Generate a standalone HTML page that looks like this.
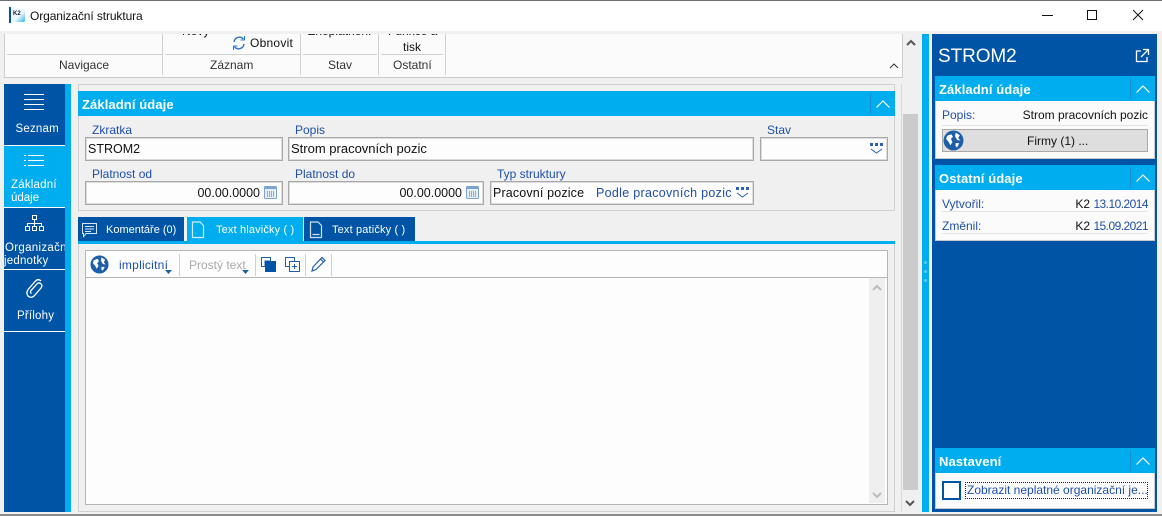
<!DOCTYPE html>
<html><head><meta charset="utf-8"><style>
html,body{margin:0;padding:0;width:1162px;height:516px;overflow:hidden;background:#f0f0f0;font-family:"Liberation Sans",sans-serif;font-size:12px;color:#111}
div,span,svg{position:absolute;box-sizing:border-box}
.t{white-space:nowrap;line-height:16px}
.lb{color:#1f4fa8}
.in{background:#fdfdfd;border:1px solid #a8a8a8;box-shadow:inset 0 0 0 1px #dcdcdc;height:24px}
.b{font-weight:bold;color:#fff;font-size:13px;letter-spacing:.1px}
.w{color:#fff}
.line{background:#d0d0d0}
.d{position:static;letter-spacing:-.55px}
</style></head><body>
<div style="left:0;top:0;width:1162px;height:31px;background:#fff"></div>
<div style="left:0;top:0;width:1162px;height:1px;background:#6e6e6e"></div>
<div style="left:0;top:514px;width:1162px;height:2px;background:#8a8a8a"></div>
<div style="left:9px;top:7px;width:2px;height:16px;background:#0054a6"></div>
<div style="left:12px;top:9px;width:13px;height:13px;background:linear-gradient(135deg,#eef6fb 55%,#22b5ee);border-radius:2px"></div>
<div class="t" style="left:13px;top:10px;font-size:6px;line-height:9px;font-weight:bold;color:#123">K2</div>
<div class="t" style="left:30px;top:8px;font-size:12px;letter-spacing:-.1px">Organizační struktura</div>
<div style="left:1042px;top:15px;width:11px;height:1px;background:#111"></div>
<div style="left:1087px;top:10px;width:10px;height:10px;border:1px solid #111"></div>
<svg style="left:1132px;top:9px" width="12" height="12"><path d="M1 1L11 11M11 1L1 11" stroke="#111" fill="none"/></svg>

<!-- ribbon -->
<div style="left:4px;top:34px;width:899px;height:44px;background:#fbfbfb;border-left:1px solid #cfcfcf;border-right:1px solid #cfcfcf;border-bottom:1px solid #c8c8c8;overflow:hidden">
<div class="t" style="left:177px;top:-11px">Nový</div>
<div class="t" style="left:245px;top:1px;letter-spacing:.25px">Obnovit</div>
<div class="t" style="left:303px;top:-11px">Zneplatnění</div>
<div class="t" style="left:383px;top:-11px">Funkce a</div>
<div class="t" style="left:398px;top:5px">tisk</div>
<div class="line" style="left:2px;top:20px;width:155px;height:1px"></div>
<div class="line" style="left:160px;top:20px;width:135px;height:1px"></div>
<div class="line" style="left:298px;top:20px;width:74px;height:1px"></div>
<div class="line" style="left:376px;top:20px;width:62px;height:1px"></div>
<div class="line" style="left:157px;top:0;width:1px;height:41px"></div>
<div class="line" style="left:295px;top:0;width:1px;height:41px"></div>
<div class="line" style="left:373px;top:0;width:1px;height:41px"></div>
<div class="line" style="left:440px;top:0;width:1px;height:41px"></div>
<div class="t" style="left:54px;top:23px;color:#333">Navigace</div>
<div class="t" style="left:205px;top:23px;color:#333">Záznam</div>
<div class="t" style="left:323px;top:23px;color:#333">Stav</div>
<div class="t" style="left:388px;top:23px;color:#333">Ostatní</div>
<svg style="left:883px;top:28px" width="12" height="8"><path d="M2 6L6 2L10 6" stroke="#333" fill="none"/></svg>
</div>
<svg style="left:231px;top:35px" width="16" height="16"><path d="M3 7A5.500 5.500 0 0 1 12.500 4M13 9A5.500 5.500 0 0 1 3.500 12" stroke="#2b78c5" stroke-width="1.400" fill="none"/><path d="M13.500 1V5H9.500M2.500 15V11H6.500" fill="none" stroke="#2b78c5"/></svg>

<!-- right scrollbar -->
<div style="left:903px;top:114px;width:15px;height:376px;background:#cbcbcb"></div>
<svg style="left:905px;top:39px" width="12" height="8"><path d="M2 6L6 2L10 6" stroke="#555" stroke-width="2" fill="none"/></svg>
<svg style="left:904px;top:499px" width="12" height="8"><path d="M2 2L6 6L10 2" stroke="#555" stroke-width="2" fill="none"/></svg>
<div style="left:901px;top:84px;width:1px;height:428px;background:#d8d8d8"></div>

<!-- splitter + right panel -->
<div style="left:922px;top:34px;width:7px;height:478px;background:#00adef"></div>
<div style="left:924px;top:261px;width:3px;height:3px;border-radius:2px;background:#5cc8f5"></div>
<div style="left:924px;top:270px;width:3px;height:3px;border-radius:2px;background:#5cc8f5"></div>
<div style="left:924px;top:279px;width:3px;height:3px;border-radius:2px;background:#5cc8f5"></div>
<div style="left:932px;top:34px;width:225px;height:478px;background:#0054a6"></div>
<div class="t w" style="left:938px;top:46px;font-size:19px;line-height:22px;letter-spacing:-.1px">STROM2</div>
<svg style="left:1135px;top:48px" width="15" height="15"><path d="M6 3H1.500V13.500H12V9M8 1.500H13.500V7M13.500 1.500L6 9" stroke="#fff" stroke-width="1.300" fill="none"/></svg>

<div style="left:935px;top:76px;width:220px;height:83px;background:#fbfbfb;border:1px solid #c8c8c8;border-top:0"></div>
<div style="left:935px;top:76px;width:220px;height:25px;background:#00adef"></div>
<div class="t b" style="left:939px;top:82px">Základní údaje</div>
<div style="left:1130px;top:78px;width:1px;height:21px;background:#1a8fd0"></div>
<svg style="left:1135px;top:84px" width="16" height="10"><path d="M1.500 8.500L8 2L14.500 8.500" stroke="#fff" stroke-width="1.200" fill="none"/></svg>
<div class="t lb" style="left:942px;top:107px">Popis:</div>
<div class="t" style="right:14px;top:107px">Strom pracovních pozic</div>
<div style="left:942px;top:125px;width:206px;height:1px;background:#e4e4e4"></div>
<div style="left:942px;top:129px;width:206px;height:23px;background:#dedede;border:1px solid #a9a9a9"></div>
<div class="t" style="left:1027px;top:133px">Firmy (1) ...</div>
<svg style="left:943px;top:130px" width="21" height="21" viewBox="0 0 20 20"><circle cx="10" cy="10" r="9.500" fill="#1f5fa8"/><path d="M4 5.500L8 4L9.500 6.500L7.500 8.500L9 11.500L7 14.500L5.500 11.500L3 8.500ZM12 2.500L16 5L14.500 7.500L16.500 10L13.500 9.500L11.500 6ZM12 12.500L15.500 12.500L13.500 16.500L12 15.500Z" fill="#fff"/></svg>

<div style="left:935px;top:165px;width:220px;height:76px;background:#fbfbfb;border:1px solid #c8c8c8;border-top:0"></div>
<div style="left:935px;top:165px;width:220px;height:25px;background:#00adef"></div>
<div class="t b" style="left:939px;top:171px">Ostatní údaje</div>
<div style="left:1130px;top:167px;width:1px;height:21px;background:#1a8fd0"></div>
<svg style="left:1135px;top:173px" width="16" height="10"><path d="M1.500 8.500L8 2L14.500 8.500" stroke="#fff" stroke-width="1.200" fill="none"/></svg>
<div class="t lb" style="left:942px;top:196px">Vytvořil:</div>
<div class="t" style="right:14px;top:196px"><span style="position:static">K2</span> <span class="lb d">13.10.2014</span></div>
<div style="left:942px;top:211px;width:206px;height:1px;background:#e4e4e4"></div>
<div class="t lb" style="left:942px;top:218px">Změnil:</div>
<div class="t" style="right:14px;top:218px"><span style="position:static">K2</span> <span class="lb d">15.09.2021</span></div>
<div style="left:942px;top:233px;width:206px;height:1px;background:#e4e4e4"></div>

<div style="left:935px;top:448px;width:220px;height:61px;background:#fbfbfb;border:1px solid #c8c8c8;border-top:0"></div>
<div style="left:935px;top:448px;width:220px;height:25px;background:#00adef"></div>
<div class="t b" style="left:939px;top:454px">Nastavení</div>
<div style="left:1130px;top:450px;width:1px;height:21px;background:#1a8fd0"></div>
<div style="left:942px;top:481px;width:19px;height:19px;background:#fff;border:2px solid #0054a6"></div>
<svg style="left:1135px;top:456px" width="16" height="10"><path d="M1.500 8.500L8 2L14.500 8.500" stroke="#fff" stroke-width="1.200" fill="none"/></svg>
<div class="t lb" style="left:965px;top:482px;width:183px;height:17px;border:1px dotted #222;overflow:hidden;line-height:15px;padding-left:1px">Zobrazit neplatné organizační je...</div>

<!-- left nav -->
<div style="left:4px;top:84px;width:61px;height:428px;background:#0054a6"></div>
<div style="left:65px;top:84px;width:6px;height:428px;background:#00adef"></div>
<div style="left:4px;top:146px;width:61px;height:61px;background:#00adef"></div>
<div style="left:4px;top:145px;width:61px;height:1px;background:#fff"></div>
<div style="left:4px;top:207px;width:61px;height:1px;background:#fff"></div>
<div style="left:4px;top:269px;width:61px;height:1px;background:#fff"></div>
<div style="left:4px;top:331px;width:61px;height:1px;background:#fff"></div>
<div style="left:24px;top:94px;width:20px;height:1px;background:#fff"></div>
<div style="left:24px;top:99px;width:20px;height:1px;background:#fff"></div>
<div style="left:24px;top:104px;width:20px;height:1px;background:#fff"></div>
<div style="left:24px;top:109px;width:20px;height:1px;background:#fff"></div>
<div class="t w" style="left:15.500px;top:121px;font-size:11.500px;letter-spacing:.2px">Seznam</div>
<svg style="left:24px;top:154px" width="20" height="14"><path d="M4 1.500H20M4 6.500H20M4 11.500H20M0 1.500H2M0 6.500H2M0 11.500H2" stroke="#fff" stroke-width="1"/></svg>
<div class="t w" style="left:11px;top:177px;font-size:11.500px;letter-spacing:.2px">Základní</div>
<div class="t w" style="left:11px;top:190px;font-size:11.500px">údaje</div>
<svg style="left:25px;top:215px" width="19" height="17" fill="none" stroke="#fff"><path d="M7.500 .5H11.500V4.500H7.500ZM.5 11.500H4.500V15.500H.5ZM7.500 11.500H11.500V15.500H7.500ZM14.500 11.500H18.500V15.500H14.500ZM9.500 4.500V11.500M2.500 11.500V8.500H16.500V11.500"/></svg>
<div class="t w" style="left:5px;top:240px;width:60px;overflow:hidden;font-size:11.500px;letter-spacing:.3px">Organizační</div>
<div class="t w" style="left:4px;top:253px;font-size:11.500px;letter-spacing:.2px">jednotky</div>
<svg style="left:25px;top:278px" width="20" height="24" fill="none" stroke="#fff" stroke-width="1.300"><path d="M16 3C14 1 12 1.500 10.500 3L3.500 11C1.500 13.500 1.500 16 3 18C5 20 8 19.500 9.500 17.500L16 10C17.500 8 17 6.500 15.500 5.500C14 4.500 12.500 5 11.500 6.500L6 12.500C5 14 5.500 15 6.500 15.500"/></svg>
<div class="t w" style="left:17px;top:307.500px;font-size:11.500px;letter-spacing:.2px">Přílohy</div>

<!-- form -->
<div style="left:78px;top:84px;width:817px;height:127px;border:1px solid #d0d0d0"></div>
<div style="left:78px;top:91px;width:817px;height:25px;background:#00adef"></div>
<div class="t b" style="left:82px;top:97px">Základní údaje</div>
<div style="left:870px;top:93px;width:1px;height:21px;background:#1a8fd0"></div>
<svg style="left:875px;top:99px" width="16" height="10"><path d="M1.500 8.500L8 2L14.500 8.500" stroke="#fff" stroke-width="1.200" fill="none"/></svg>

<div class="t lb" style="left:92px;top:122px">Zkratka</div>
<div class="t lb" style="left:295px;top:122px">Popis</div>
<div class="t lb" style="left:767px;top:122px">Stav</div>
<div class="in" style="left:85px;top:137px;width:198px"></div>
<div class="t" style="left:88px;top:141px;font-size:12.500px">STROM2</div>
<div class="in" style="left:288px;top:137px;width:466px"></div>
<div class="t" style="left:291px;top:141px;font-size:13px">Strom pracovních pozic</div>
<div class="in" style="left:760px;top:137px;width:128px"></div>
<svg style="left:870px;top:143px" width="13" height="12" fill="none"><path d="M0 0h3v3H0zM5 0h3v3H5zM10 0h3v3h-3z" fill="#2b62ad"/><path d="M1 6L6.500 10L12 6" stroke="#2b62ad"/></svg>

<div class="t lb" style="left:92px;top:166px">Platnost od</div>
<div class="t lb" style="left:295px;top:166px">Platnost do</div>
<div class="t lb" style="left:497px;top:166px">Typ struktury</div>
<div class="in" style="left:85px;top:181px;width:198px"></div>
<div class="t" style="right:902px;top:185px;font-size:12.500px">00.00.0000</div>
<svg style="left:264px;top:186px" width="13" height="13"><rect x=".5" y=".5" width="12" height="12" rx="1" fill="#e6eef8" stroke="#7ba4d3"/><rect x="1" y="1" width="11" height="2" fill="#7ba4d3"/><path d="M3 6h7M3 8h7M3 10h7" stroke="#3a68ad" stroke-dasharray="1 1"/></svg>
<div class="in" style="left:288px;top:181px;width:196px"></div>
<div class="t" style="right:700px;top:185px;font-size:12.500px">00.00.0000</div>
<svg style="left:466px;top:186px" width="13" height="13"><rect x=".5" y=".5" width="12" height="12" rx="1" fill="#e6eef8" stroke="#7ba4d3"/><rect x="1" y="1" width="11" height="2" fill="#7ba4d3"/><path d="M3 6h7M3 8h7M3 10h7" stroke="#3a68ad" stroke-dasharray="1 1"/></svg>
<div class="in" style="left:490px;top:181px;width:264px"></div>
<div class="t" style="left:493px;top:185px;font-size:12.500px;letter-spacing:.15px">Pracovní pozice</div>
<div class="t lb" style="left:596px;top:185px;font-size:12.500px;letter-spacing:.3px">Podle pracovních pozic</div>
<svg style="left:736px;top:187px" width="13" height="12" fill="none"><path d="M0 0h3v3H0zM5 0h3v3H5zM10 0h3v3h-3z" fill="#2b62ad"/><path d="M1 6L6.500 10L12 6" stroke="#2b62ad"/></svg>

<!-- tabs -->
<div style="left:78px;top:217px;width:106px;height:25px;background:#0054a6"></div>
<div style="left:187px;top:217px;width:116px;height:25px;background:#00adef"></div>
<div style="left:304px;top:217px;width:111px;height:25px;background:#0054a6"></div>
<div style="left:78px;top:241px;width:817px;height:3px;background:#00adef"></div>
<svg style="left:81px;top:222px" width="17" height="16" fill="none" stroke="#d6e6f5"><path d="M1.500 1.500H15.500V11.500H5L2.500 14.500V11.500H1.500Z"/><path d="M4 4.500H13M4 7H13M4 9.500H10"/></svg>
<div class="t w" style="left:106px;top:222px;font-size:11px">Komentáře (0)</div>
<svg style="left:191px;top:221px" width="14" height="18" fill="none" stroke="#cdeefc" stroke-width="1.200"><path d="M1.500 1H9L12.500 4.500V16.500H1.500Z"/></svg>
<div class="t w" style="left:216px;top:222px;font-size:11px;letter-spacing:.15px">Text hlavičky ( )</div>
<svg style="left:309px;top:221px" width="14" height="18" fill="none" stroke="#cfe2f5" stroke-width="1.200"><path d="M1.500 1H9L12.500 4.500V16.500H1.500ZM3.500 13.500H10.500"/></svg>
<div class="t w" style="left:332px;top:222px;font-size:11px;letter-spacing:.15px">Text patičky ( )</div>

<!-- editor -->
<div style="left:78px;top:244px;width:817px;height:268px;border:1px solid #d0d0d0;border-top:0"></div>
<div style="left:85px;top:250px;width:803px;height:255px;background:#fdfdfd;border:1px solid #b5b5b5"></div>
<div style="left:86px;top:277px;width:801px;height:1px;background:#b5b5b5"></div>
<div style="left:869px;top:278px;width:16px;height:225px;background:#efefef"></div>
<svg style="left:871px;top:284px" width="12" height="8"><path d="M2 6L6 2L10 6" stroke="#bbb" stroke-width="2" fill="none"/></svg>
<svg style="left:871px;top:491px" width="12" height="8"><path d="M2 2L6 6L10 2" stroke="#bbb" stroke-width="2" fill="none"/></svg>
<svg style="left:90px;top:255px" width="19" height="19" viewBox="0 0 20 20"><circle cx="10" cy="10" r="9.500" fill="#1f5fa8"/><path d="M4 5.500L8 4L9.500 6.500L7.500 8.500L9 11.500L7 14.500L5.500 11.500L3 8.500ZM12 2.500L16 5L14.500 7.500L16.500 10L13.500 9.500L11.500 6ZM12 12.500L15.500 12.500L13.500 16.500L12 15.500Z" fill="#fff"/></svg>
<div class="t lb" style="left:119px;top:257px;letter-spacing:.25px">implicitní</div>
<svg style="left:165px;top:270px" width="7" height="4"><path d="M0 0H7L3.500 4Z" fill="#1f5fa8"/></svg>
<div style="left:179px;top:254px;width:1px;height:22px;background:#d0d0d0"></div>
<div class="t" style="left:189px;top:257px;color:#aaa">Prostý text</div>
<svg style="left:242px;top:270px" width="7" height="4"><path d="M0 0H7L3.500 4Z" fill="#1f5fa8"/></svg>
<div style="left:255px;top:254px;width:1px;height:22px;background:#d0d0d0"></div>
<svg style="left:261px;top:257px" width="15" height="15"><path d="M.5 .5H9.500V4H4V9.500H.5Z" fill="#fff" stroke="#1f5fa8"/><rect x="4" y="4" width="11" height="11" fill="#0054a6"/></svg>
<svg style="left:285px;top:257px" width="15" height="15" fill="#fff" stroke="#1f5fa8"><path d="M.5 .5H9.500V4.500H4.500V9.500H.5Z"/><rect x="4.500" y="4.500" width="10" height="10"/><path d="M9.500 7V12M7 9.500H12"/></svg>
<div style="left:305px;top:254px;width:1px;height:22px;background:#d0d0d0"></div>
<svg style="left:311px;top:256px" width="15" height="16" fill="none" stroke="#1f5fa8" stroke-width="1.200"><path d="M1 15L2 11L11 1.500L14 4.500L5 13.500ZM9.500 3L12.500 6"/></svg>
<div style="left:331px;top:254px;width:1px;height:22px;background:#d0d0d0"></div>
</body></html>
